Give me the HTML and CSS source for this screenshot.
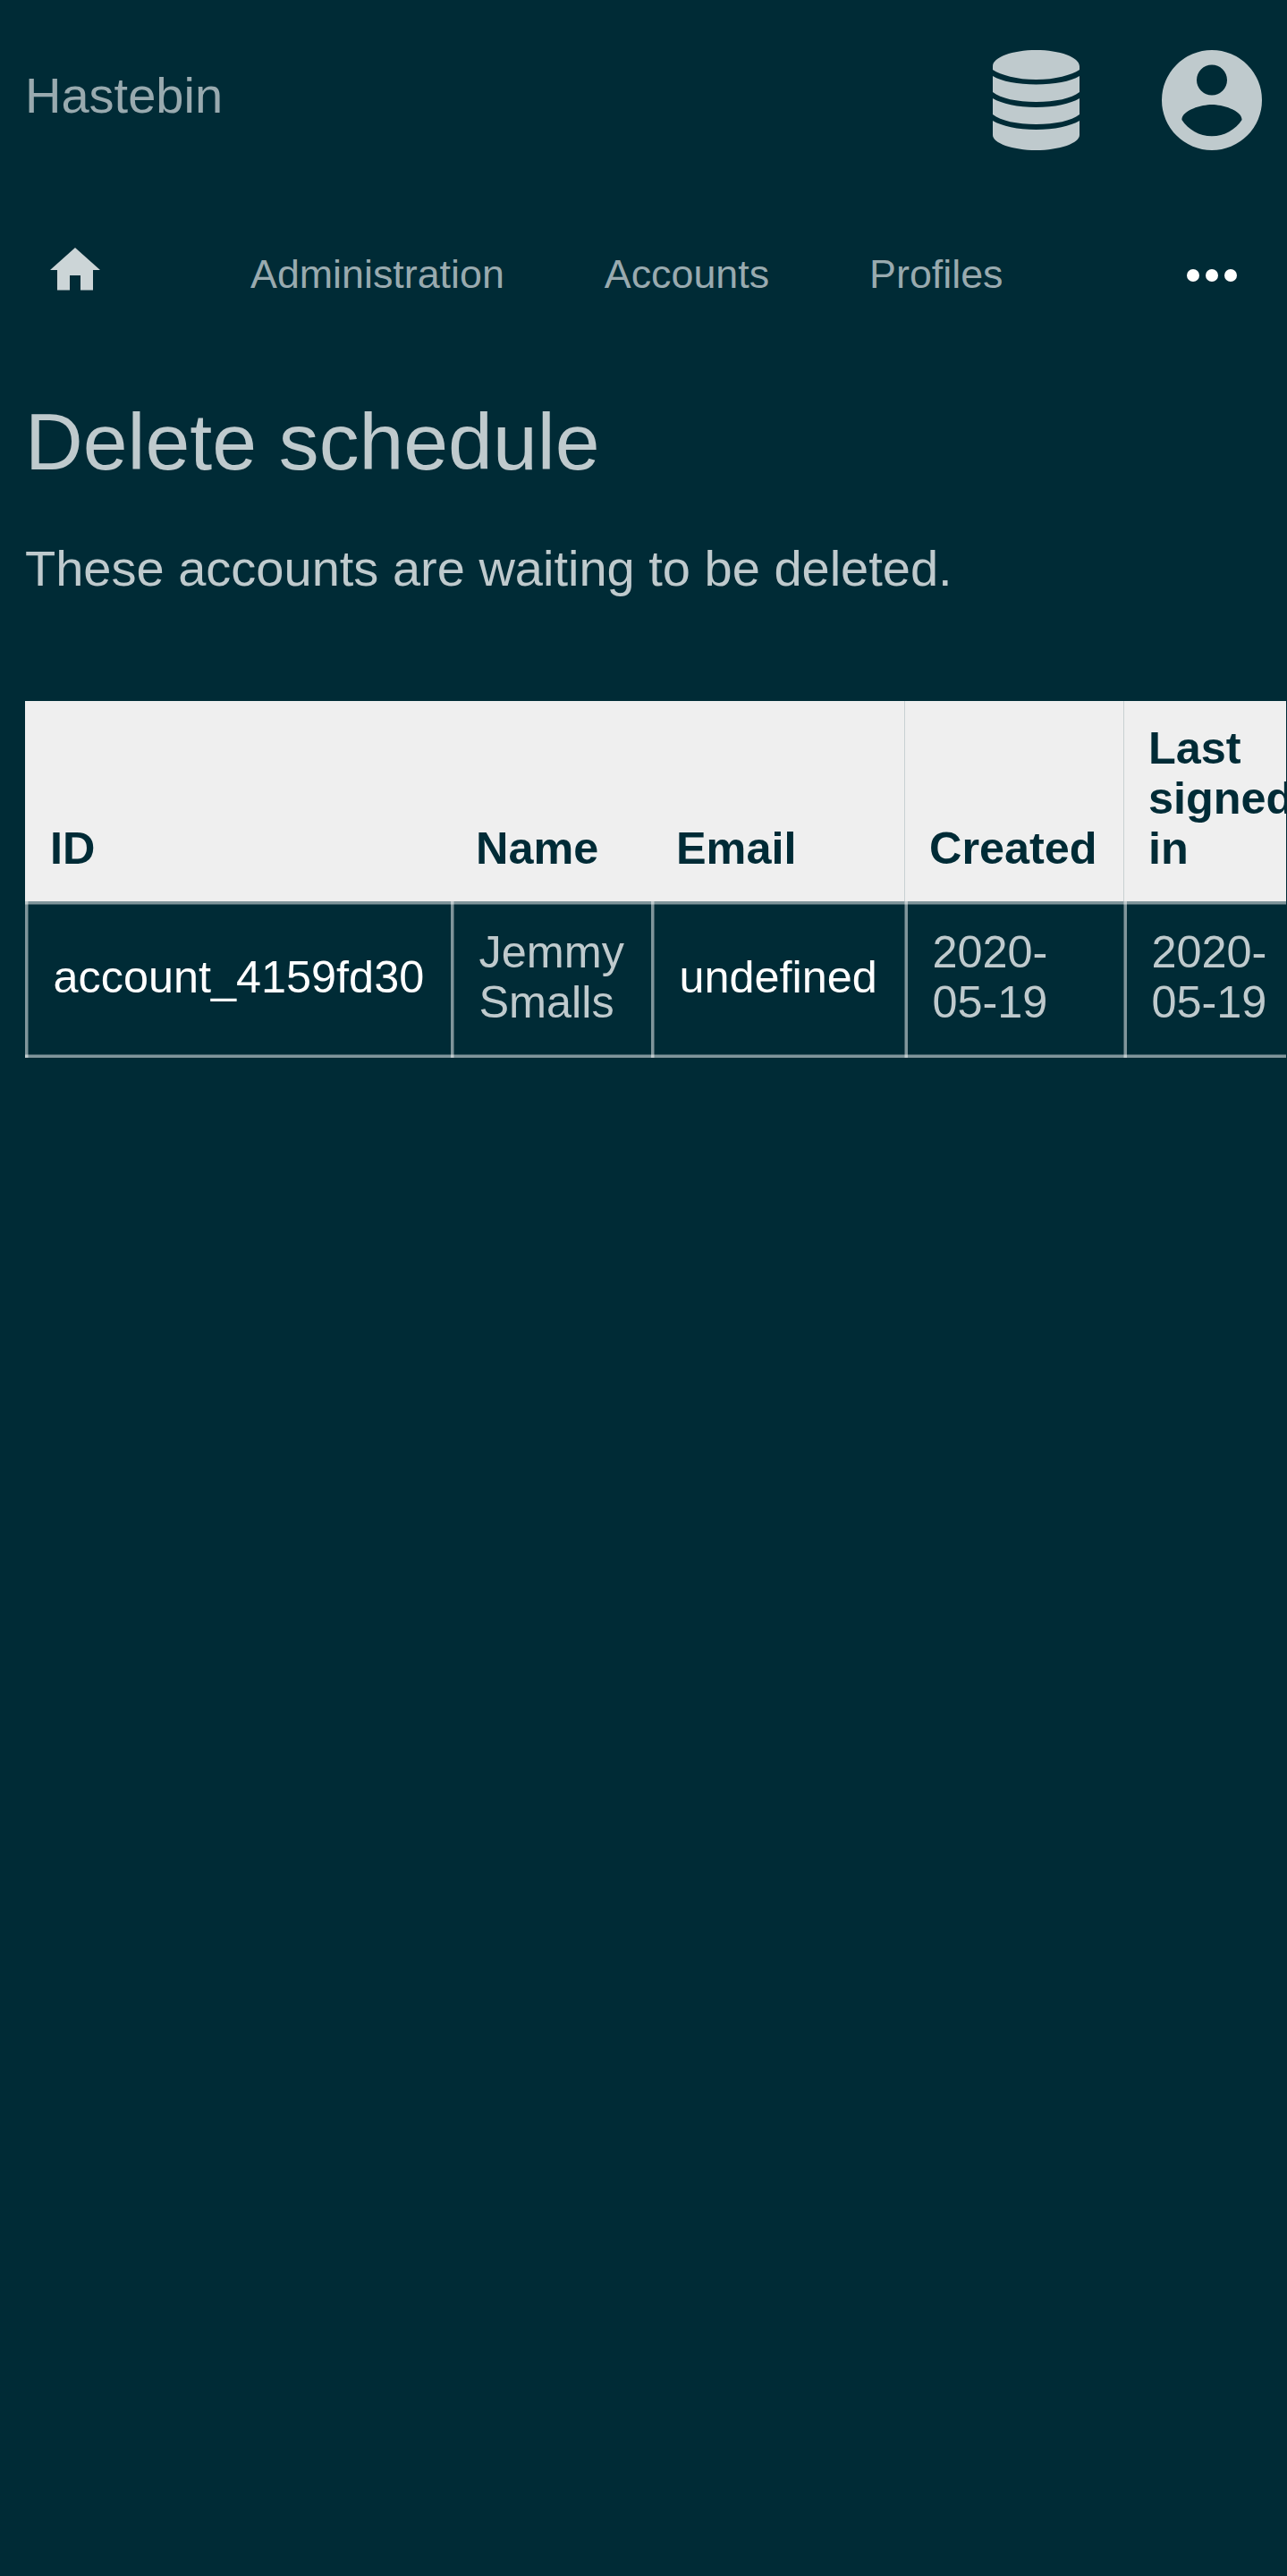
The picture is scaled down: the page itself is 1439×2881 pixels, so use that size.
FILE: index.html
```html
<!DOCTYPE html>
<html lang="en">
<head>
<meta charset="utf-8">
<title>Hastebin</title>
<link rel="stylesheet" href="styles.css">
</head>
<body>
<header class="header">
  <a class="brand">Hastebin</a>
  <div class="header-icons">
    <svg class="icon-database" viewBox="0 0 97 112"><path d="M0 18C0 8 22 0 48.500 0S97 8 97 18V22C88 28 70 33 48.500 33S9 28 0 22ZM0 29C10 35 28 38.500 48.500 38.500S87 35 97 29V47C88 54 70 58 48.500 58S9 54 0 47ZM0 54C10 60 28 64 48.500 64S87 60 97 54V72C88 79 70 83 48.500 83S9 79 0 72ZM0 79C10 85 28 89 48.500 89S87 85 97 79V95C97 104 75 112 48.500 112S0 104 0 95Z"/></svg>
    <svg class="icon-account" viewBox="0 0 112 112"><path fill-rule="evenodd" d="M56 0a56 56 0 1 0 0 112a56 56 0 1 0 0-112zM56 16.500a17 17 0 1 1 0 34a17 17 0 1 1 0-34zM56 96.300C42 96.300 29.500 89 22.400 78C22.600 67 44.800 61 56 61S89.400 67 89.600 78C82.500 89 70 96.300 56 96.300z"/></svg>
  </div>
</header>
<nav class="nav">
  <a class="nav-home"><svg class="icon-home" viewBox="0 0 56 48"><path d="M28 0L56 25H48V47.500H34V31H22V47.500H8V25H0Z"/></svg></a>
  <a class="nav-link">Administration</a>
  <a class="nav-link">Accounts</a>
  <a class="nav-link">Profiles</a>
  <a class="nav-more"><svg class="icon-more" viewBox="0 0 56 14"><circle cx="7" cy="7" r="7"/><circle cx="28" cy="7" r="7"/><circle cx="49" cy="7" r="7"/></svg></a>
</nav>
<main class="content">
  <h1 class="title">Delete schedule</h1>
  <p class="lead">These accounts are waiting to be deleted.</p>
  <div class="table-wrap">
    <table class="table">
      <colgroup><col class="col-id"><col class="col-name"><col class="col-email"><col class="col-date"><col class="col-date"></colgroup>
      <thead><tr><th>ID</th><th>Name</th><th>Email</th><th class="ruled">Created</th><th class="ruled">Last signed in</th></tr></thead>
      <tbody><tr><td><a class="link">account_4159fd30</a></td><td>Jemmy Smalls</td><td><a class="link">undefined</a></td><td class="date">2020-05-19</td><td class="date">2020-05-19</td></tr></tbody>
    </table>
  </div>
</main>
</body>
</html>
```
FILE: styles.css
```css
* { box-sizing: border-box; }
body {
  margin: 0;
  min-height: 100vh;
  overflow: hidden;
  background: #002b36;
  color: #bfcacd;
  font: 56px/64px "Liberation Sans", Arial, sans-serif;
}
.header {
  display: flex;
  justify-content: space-between;
  height: 224px;
  padding: 56px 28px 0;
}
.brand { color: #99aaaf; padding-top: 19px; }
.header-icons { display: flex; gap: 92px; fill: #bfcacd; }
.icon-database { width: 97px; height: 112px; }
.icon-account { width: 112px; height: 112px; }
.nav {
  display: flex;
  height: 168px;
  padding: 53px 56px 0;
  font-size: 44.8px;
  line-height: 58px;
}
.nav-home { width: 168px; fill: #ccd5d7; }
.nav-link { color: #99aaaf; padding: 0 56px; }
.nav-more { margin-left: auto; fill: #fff; }
.icon-home { display: block; width: 56px; height: 48px; }
.icon-more { display: block; width: 56px; height: 14px; margin-top: 24px; }
.content { padding: 56px 0 0 28px; }
.title { margin: 0; font-size: 89.6px; line-height: 92px; font-weight: 400; }
.lead { margin: 64px 0 116px; }
.table-wrap { width: 1410px; overflow: hidden; }
.table {
  width: 1473px;
  table-layout: fixed;
  border-collapse: separate;
  border-spacing: 0;
  font-size: 50.4px;
  line-height: 56px;
}
.col-id { width: 476px; }
.col-name { width: 224px; }
.col-email { width: 283px; }
.col-date { width: 245px; }
th {
  height: 224px;
  padding: 25px 28px 31px;
  background: #efefef;
  color: #002b36;
  text-align: left;
  vertical-align: bottom;
}
.ruled { box-shadow: inset 1px 0 #c8d0d2; }
td {
  height: 175px;
  padding: 28.5px 28px 34.5px 31.5px;
  vertical-align: middle;
  --line: rgba(255, 255, 255, .5);
  --edge: rgba(255, 255, 255, .25);
  --left: linear-gradient(to right, var(--line) 3px, var(--edge) 3px 4px, transparent 4px);
  background:
    var(--left),
    linear-gradient(to bottom, var(--line) 3px, var(--edge) 3px 4px, transparent 4px),
    linear-gradient(to top, var(--line) 3px, var(--edge) 3px 4px, transparent 4px);
}
.date {
  --left: linear-gradient(to right, var(--edge) 1px, var(--line) 1px 4px, transparent 4px);
}
.link { color: #fff; }
```
